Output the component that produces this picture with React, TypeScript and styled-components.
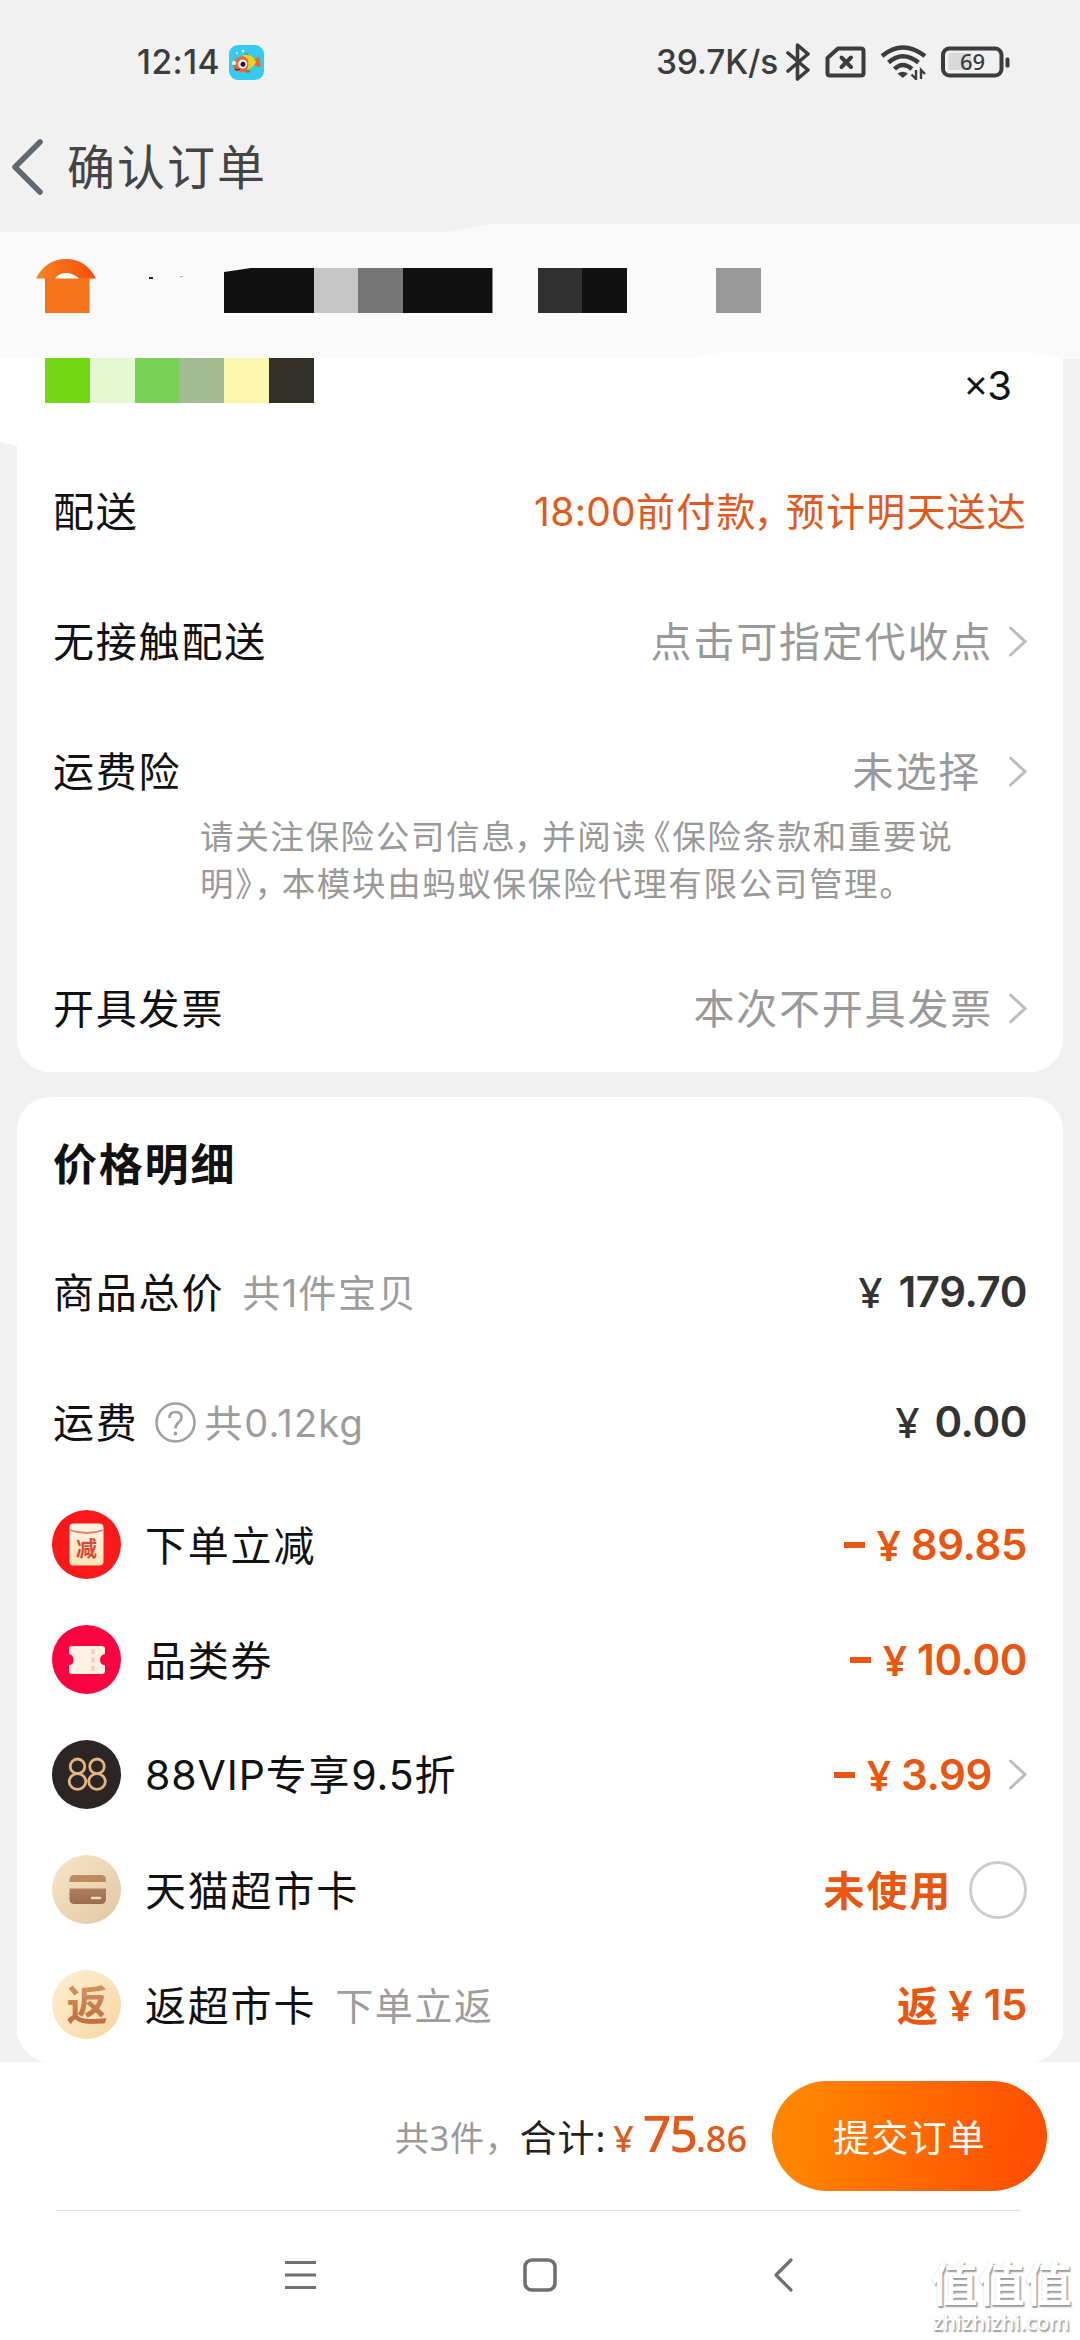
import React from 'react';
import styled, { createGlobalStyle } from 'styled-components';

const GlobalStyle = createGlobalStyle`
  * { box-sizing: border-box; }
  body { margin: 0; background: #f1f1f1; }
`;

const Screen = styled.div`
  width: 1080px;
  height: 2340px;
  display: flex;
  flex-direction: column;
  overflow: hidden;
  position: relative;
  background: #f1f1f1;
  color: #111;
  font-family: 'Noto Sans', 'Noto Sans CJK SC', sans-serif;
  white-space: nowrap;
`;

const StatusBar = styled.header`
  height: 124px;
  display: flex;
  align-items: center;
  justify-content: space-between;
  padding: 0 70px 0 137px;
  color: #3c3c3c;
`;

const StatusGroup = styled.div`
  display: flex;
  align-items: center;
`;

const StatusText = styled.span<{ $gap: number; $track: number }>`
  font-family: Inter, 'Noto Sans', sans-serif;
  font-size: 33.5px;
  font-weight: 500;
  line-height: 40px;
  letter-spacing: ${(p) => p.$track}px;
  margin-right: ${(p) => p.$gap}px;
`;

const StatusIcon = styled.svg<{ $gap?: number }>`
  display: block;
  margin-right: ${(p) => p.$gap ?? 0}px;
`;

const TitleBar = styled.div`
  height: 100px;
  display: flex;
  align-items: center;
  padding: 0 0 15px 9px;
`;

const BackIcon = styled.svg`
  display: block;
  margin: 0 22px 0 0;
`;

const PageTitle = styled.h1`
  margin: 0;
  font-size: 48px;
  font-weight: 400;
  line-height: 60px;
  letter-spacing: 2px;
  color: #444;
`;

const AddressBand = styled.section`
  position: relative;
  z-index: 1;
  flex: none;
  height: 135px;
  display: flex;
  align-items: flex-start;
  padding: 35px 0 0 36px;
  background: #fafafa;
  clip-path: polygon(0 8px, 448px 8px, 488px 0, 100% 0, 100% 135px, 1063px 135px, 1032px 128px, 722px 128px, 688px 134px, 0 134px);
`;

const HouseIcon = styled.svg`
  display: block;
  margin-right: 53px;
`;

const NameTrace = styled.svg`
  display: block;
  margin: 16px 39px 0 0;
`;

const Blocks = styled.div<{ $top?: number; $right?: number; $notched?: boolean }>`
  display: flex;
  margin: ${(p) => p.$top ?? 0}px ${(p) => p.$right ?? 0}px 0 0;
  clip-path: ${(p) => (p.$notched ? 'polygon(0 4px, 27px 0, 100% 0, 100% 100%, 0 100%)' : 'none')};
`;

const Block = styled.i<{ $color: string }>`
  width: 44.75px;
  height: 45px;
  background: ${(p) => p.$color};
`;

const ProductBand = styled.section`
  flex: none;
  width: 1063px;
  height: 94px;
  margin-top: -7px;
  padding: 6px 51px 0 45px;
  display: flex;
  justify-content: space-between;
  background: #fff;
  clip-path: polygon(0 0, 100% 0, 100% 100%, 17px 100%, 0 90px);
`;

const Quantity = styled.span`
  margin-top: 3px;
  font-family: 'Noto Sans', Inter, sans-serif;
  font-size: 40px;
  line-height: 48px;
`;

const Card = styled.section<{ $height: number; $open?: boolean }>`
  flex: none;
  height: ${(p) => p.$height}px;
  margin: 0 17px ${(p) => (p.$open ? 25 : 0)}px;
  padding: 0 36px;
  background: #fff;
  border-radius: ${(p) => (p.$open ? '0 0 33px 33px' : '33px')};
`;

const Row = styled.div<{ $height?: number; $top?: number }>`
  height: ${(p) => p.$height ?? 130}px;
  margin-top: ${(p) => p.$top ?? 0}px;
  padding-bottom: 2px;
  display: flex;
  align-items: center;
  font-size: 41px;
  letter-spacing: 1.8px;
  line-height: 50px;
`;

const Label = styled.span`
  margin-right: auto;
  display: flex;
  align-items: center;
`;

const Sub = styled.span<{ $left: number }>`
  margin-left: ${(p) => p.$left}px;
  font-size: 38px;
  letter-spacing: 1.6px;
  color: #9c9c9c;
`;

const Latin = styled.span<{ $track?: number }>`
  font-family: Inter, 'Noto Sans', sans-serif;
  letter-spacing: ${(p) => p.$track ?? 0}px;
`;

const Value = styled.span<{ $gap?: number }>`
  color: #999;
  margin-right: ${(p) => p.$gap ?? 15}px;
`;

const Promise = styled.span`
  font-size: 39px;
  letter-spacing: 1.2px;
  color: #e2591b;
`;

const Squeeze = styled.span<{ $l?: number; $r?: number }>`
  margin-left: ${(p) => p.$l ?? 0}px;
  margin-right: ${(p) => p.$r ?? 0}px;
`;

const Note = styled.p`
  margin: -24px 0 0 147px;
  font-size: 33.5px;
  line-height: 47px;
  letter-spacing: 1.65px;
  color: #999;
`;

const CardTitle = styled.h2`
  margin: 0;
  height: 131px;
  padding-bottom: 2px;
  display: flex;
  align-items: center;
  font-size: 44px;
  font-weight: 700;
  letter-spacing: 1.8px;
`;

const Money = styled.span<{ $accent?: boolean; $gap?: number }>`
  display: flex;
  align-items: center;
  font-family: Inter, 'Noto Sans', sans-serif;
  font-size: 42px;
  font-weight: 600;
  letter-spacing: -0.4px;
  color: ${(p) => (p.$accent ? '#e8560f' : '#333')};
  margin-right: ${(p) => p.$gap ?? 0}px;
`;

const Yen = styled.span<{ $gap: number; $light?: boolean }>`
  font-family: 'Noto Sans', sans-serif;
  font-weight: ${(p) => (p.$light ? 500 : 600)};
  margin-right: ${(p) => p.$gap}px;
  letter-spacing: 0;
`;

const Minus = styled.i`
  width: 21px;
  height: 6px;
  margin-right: 12px;
  background: currentColor;
`;

const Prefix = styled.span`
  font-family: 'Noto Sans', 'Noto Sans CJK SC', sans-serif;
  font-size: 41px;
  font-weight: 700;
  margin-right: 11px;
`;

const Unused = styled.span`
  font-size: 41px;
  font-weight: 700;
  letter-spacing: 1.8px;
  color: #e8560f;
  margin-right: 17px;
`;

const Radio = styled.i`
  width: 58px;
  height: 58px;
  border: 3px solid #ccc;
  border-radius: 50%;
`;

const Badge = styled.svg`
  display: block;
  margin: 0 24px 0 -1px;
`;

const HelpIcon = styled.svg`
  display: block;
  margin: 0 9px 0 16px;
`;

const CheckoutBar = styled.footer`
  position: relative;
  flex: none;
  height: 278px;
  background: #fff;
`;

const Summary = styled.div`
  height: 148px;
  display: flex;
  align-items: center;
  justify-content: flex-end;
  padding-right: 33px;
`;

const Count = styled.span`
  font-size: 34px;
  letter-spacing: 0.8px;
  color: #999;
  margin-right: 0;
`;

const TotalLabel = styled.span`
  font-size: 37px;
  letter-spacing: 0.9px;
  color: #222;
  margin-right: 7px;
`;

const Total = styled.span`
  display: flex;
  align-items: baseline;
  font-size: 36px;
  line-height: 60px;
  font-weight: 500;
  color: #e2591b;
  margin-right: 25px;
`;

const TotalInt = styled.span`
  font-size: 50px;
  letter-spacing: -2px;
  margin-left: 9px;
`;

const Submit = styled.button`
  width: 275px;
  height: 110px;
  border: 0;
  border-radius: 55px;
  padding: 0;
  background: linear-gradient(100deg, #ff8600 10%, #ff5000 90%);
  color: #fff;
  font: 400 37px/50px 'Noto Sans CJK SC', sans-serif;
  letter-spacing: 1.3px;
`;

const Divider = styled.hr`
  margin: 0 60px 0 56px;
  border: 0;
  height: 1px;
  background: #dedede;
`;

const SystemNav = styled.nav`
  height: 129px;
  display: flex;
  align-items: center;
  padding: 0 0 1px 284px;
`;

const HomeKey = styled.svg`
  margin: 0 216px 0 206px;
`;

const Watermark = styled.div`
  position: absolute;
  right: 8px;
  bottom: 5px;
  width: 142px;
  text-align: center;
  color: #fff;
  text-shadow: 1.5px 1.5px 1.5px #999, 0 0 1px #ccc;
`;

const WatermarkMark = styled.div`
  margin-bottom: 3px;
  font: 700 47px/50px 'Noto Sans CJK SC', sans-serif;
`;

const WatermarkUrl = styled.div`
  font: 600 21px/26px 'Open Sans', sans-serif;
`;

const Chevron = () => (
  <svg width="19" height="31" viewBox="0 0 19 31" fill="none">
    <path d="M2.5 2 17 15.5 2.5 29" stroke="#bdbdbd" strokeWidth="3" strokeLinecap="round" />
  </svg>
);

const FishApp = () => (
  <StatusIcon width="35" height="35" viewBox="0 0 35 35">
    <rect width="35" height="35" rx="9" fill="#35cbf0" />
    <circle cx="8" cy="8" r="1.2" fill="#b8f1ff" />
    <circle cx="14" cy="6" r="1.3" fill="#b8f1ff" />
    <path d="M14 11Q18 5 20 11Z" fill="#a87f32" />
    <path d="M25 15Q29 11 31 13Q30 17 32 21Q28 24 25 19Z" fill="#ee6534" />
    <path d="M14 10Q23 8 27 17Q23 25 15 25Z" fill="#e8d51d" />
    <path d="M4 20Q5 12 14 11Q21 13 19 22Q18 28 11 27Q4 25 4 20Z" fill="#ec6637" />
    <path d="M16 25Q20 24 22 27L17 28Z" fill="#b76a28" />
    <circle cx="5" cy="18" r="2" fill="#fff" />
    <circle cx="13.5" cy="19" r="4.5" fill="#fff" />
    <circle cx="14" cy="19.3" r="2.5" fill="#17123d" />
    <path d="M6 24Q8 26 11 24" stroke="#612" strokeWidth="1.2" fill="none" />
  </StatusIcon>
);

const StatusIcons = () => (
  <>
    <StatusIcon $gap={15} width="24" height="40" viewBox="0 0 24 40" fill="none" stroke="currentColor" strokeWidth="3.6" strokeLinejoin="round" strokeLinecap="round">
      <path d="M2 11 22 28 11.5 37V3L22 12 2 29" />
    </StatusIcon>
    <StatusIcon $gap={14} width="41" height="32" viewBox="0 0 41 32" fill="none" stroke="currentColor" strokeWidth="4">
      <path d="M13 2.5H36Q38.5 2.5 38.5 5V27Q38.5 29.5 36 29.5H5Q2.5 29.5 2.5 27V12Z" strokeLinejoin="round" />
      <path d="M16.5 11.5 26 21M26 11.5 16.5 21" strokeLinecap="round" />
    </StatusIcon>
    <StatusIcon $gap={14} width="47" height="36" viewBox="0 0 47 36" fill="none" stroke="currentColor" strokeWidth="4.4">
      <path d="M2 12Q22.500-5 45 12" />
      <path d="M8.500 18.500Q22.500 6 38.500 18.500" />
      <path d="M14.500 25Q22.500 17 32 25" />
      <path d="M17.500 29.500Q22.500 26 28 29.500L22.800 34Z" fill="currentColor" stroke="none" />
      <g strokeWidth="2.4">
        <path d="M36 26V35L31.500 30.500M41 35V26L45 30" />
      </g>
    </StatusIcon>
    <StatusIcon width="69" height="32" viewBox="0 0 69 32">
      <rect x="2" y="2.500" width="58.500" height="27" rx="6.500" fill="none" stroke="currentColor" strokeWidth="4" />
      <rect x="7.500" y="7" width="23" height="17" rx="2" fill="#d9d9d9" />
      <rect x="64.500" y="11.500" width="4" height="10" rx="1.500" fill="currentColor" />
      <text x="31.500" y="24" textAnchor="middle" fontSize="22" fontWeight="500" fill="currentColor">69</text>
    </StatusIcon>
  </>
);

const ReduceBadge = () => (
  <Badge width="69" height="69" viewBox="0 0 69 69">
    <defs>
      <linearGradient id="packet" x2="0" y2="1">
        <stop stopColor="#fff6e8" />
        <stop offset="1" stopColor="#ffe6b6" />
      </linearGradient>
    </defs>
    <circle cx="34.500" cy="34.500" r="34.500" fill="#fb1a19" />
    <rect x="17.500" y="13.500" width="34" height="42" rx="4" fill="url(#packet)" />
    <path d="M17.500 20Q34.500 26 51.500 20" fill="none" stroke="#f07a66" strokeWidth="1.800" />
    <text x="34.500" y="46" textAnchor="middle" fontSize="21" fontWeight="700" letterSpacing="0" fill="#dc453a">减</text>
  </Badge>
);

const CouponBadge = () => (
  <Badge width="69" height="69" viewBox="0 0 69 69">
    <circle cx="34.500" cy="34.500" r="34.500" fill="#fb0340" />
    <path d="M20 21H50Q53 21 53 24V29Q48 30 48 35Q48 39.500 53 40.500V46Q53 49 50 49H20Q17 49 17 46V40.500Q21.500 39.500 21.500 35Q21.500 30 17 29V24Q17 21 20 21Z" fill="#fff0e4" />
    <path d="M41 24V47" stroke="#f2ccbd" strokeWidth="3.500" strokeDasharray="5 3.500" />
  </Badge>
);

const VipBadge = () => (
  <Badge width="69" height="69" viewBox="0 0 69 69" fill="none" stroke="#e2b47e" strokeWidth="2.800">
    <circle cx="34.500" cy="34.500" r="34.500" fill="#2b2525" stroke="none" />
    <ellipse cx="25.500" cy="26.300" rx="7.300" ry="7.300" />
    <ellipse cx="25.500" cy="41.500" rx="8.300" ry="7.800" />
    <ellipse cx="45" cy="26.300" rx="7.300" ry="7.300" />
    <ellipse cx="45" cy="41.500" rx="8.300" ry="7.800" />
  </Badge>
);

const WalletBadge = () => (
  <Badge width="69" height="69" viewBox="0 0 69 69">
    <defs>
      <linearGradient id="sand" x2="1" y2="1">
        <stop stopColor="#f9e6c9" />
        <stop offset="1" stopColor="#dfc6a4" />
      </linearGradient>
      <linearGradient id="leather" x2="0" y2="1">
        <stop stopColor="#b08062" />
        <stop offset="1" stopColor="#9d6a50" />
      </linearGradient>
    </defs>
    <circle cx="34.500" cy="34.500" r="34.500" fill="url(#sand)" />
    <path d="M17.500 27V25Q17.500 20 22.500 20H49Q54 20 54 25V27Z" fill="#bb8d5e" />
    <path d="M17.500 33.500H54V44Q54 49 49 49H22.500Q17.500 49 17.500 44Z" fill="url(#leather)" />
    <path d="M40 43H48" stroke="#f2dcc0" strokeWidth="2.500" strokeLinecap="round" />
  </Badge>
);

const ReturnBadge = () => (
  <Badge width="69" height="69" viewBox="0 0 69 69">
    <defs>
      <linearGradient id="cream" x2="1" y2="1">
        <stop stopColor="#fdf1d3" />
        <stop offset="1" stopColor="#f7d5a0" />
      </linearGradient>
      <linearGradient id="copper" x2="0" y2="1">
        <stop stopColor="#d79c64" />
        <stop offset="1" stopColor="#b9673a" />
      </linearGradient>
    </defs>
    <circle cx="34.500" cy="34.500" r="34.500" fill="url(#cream)" />
    <text x="35" y="49.500" textAnchor="middle" fontSize="41" fontWeight="700" letterSpacing="0" fill="url(#copper)">返</text>
  </Badge>
);

const discounts = [
  { icon: <ReduceBadge />, name: '下单立减', amount: '89.85' },
  { icon: <CouponBadge />, name: '品类券', amount: '10.00' },
];

export default function App() {
  return (
    <Screen>
      <GlobalStyle />
      <StatusBar>
        <StatusGroup>
          <StatusText $gap={9} $track={0.5}>12:14</StatusText>
          <FishApp />
        </StatusGroup>
        <StatusGroup>
          <StatusText $gap={8} $track={-0.2}>39.7K/s</StatusText>
          <StatusIcons />
        </StatusGroup>
      </StatusBar>
      <TitleBar>
        <BackIcon width="36" height="58" viewBox="0 0 36 58" fill="none">
          <path d="M31 4 6 29 31 54" stroke="#5f6771" strokeWidth="5.500" strokeLinecap="round" strokeLinejoin="round" />
        </BackIcon>
        <PageTitle>确认订单</PageTitle>
      </TitleBar>

      <AddressBand>
        <HouseIcon width="60" height="55" viewBox="0 0 60 55">
          <defs>
            <linearGradient id="roof">
              <stop stopColor="#f48420" />
              <stop offset="1" stopColor="#fb4c0a" />
            </linearGradient>
          </defs>
          <path d="M0 19.500Q10 0 30 0T60 19.500Z" fill="url(#roof)" />
          <rect x="9" y="19" width="44.500" height="35" fill="#f3721c" />
          <path d="M19 19.500Q23 14 30 14T43 19.500Z" fill="#fff" />
        </HouseIcon>
        <NameTrace width="36" height="6" viewBox="0 0 36 6">
          <rect x="0" y="2" width="4" height="2" fill="#222" />
          <rect x="31" y="1" width="3" height="1" fill="#aaa" />
        </NameTrace>
        <Blocks $top={9} $right={45} $notched>
          {['#111', '#111', '#c6c6c6', '#757575', '#111', '#111'].map((c, i) => <Block key={i} $color={c} />)}
        </Blocks>
        <Blocks $top={9} $right={89}>
          <Block $color="#303030" />
          <Block $color="#111" />
        </Blocks>
        <Blocks $top={9}>
          <Block $color="#989898" />
        </Blocks>
      </AddressBand>

      <ProductBand>
        <Blocks>
          {['#73d713', '#e4f8d1', '#7ad055', '#a2bd93', '#fdf7ae', '#303029'].map((c) => <Block key={c} $color={c} />)}
        </Blocks>
        <Quantity>×<Latin>3</Latin></Quantity>
      </ProductBand>

      <Card $height={626} $open>
        <Row $top={1}>
          <Label>配送</Label>
          <Promise><Latin $track={0.3}>18:00</Latin>前付款<Squeeze $l={-3} $r={-8}>，</Squeeze>预计明天送达</Promise>
        </Row>
        <Row>
          <Label>无接触配送</Label>
          <Value>点击可指定代收点</Value>
          <Chevron />
        </Row>
        <Row>
          <Label>运费险</Label>
          <Value $gap={27}>未选择</Value>
          <Chevron />
        </Row>
        <Note>
          请关注保险公司信息<Squeeze $l={-2} $r={-7.5}>，</Squeeze>并阅读<Squeeze $l={-10.5}>《</Squeeze>保险条款和重要说
          <br />
          明<Squeeze $r={1}>》</Squeeze><Squeeze $r={-8}>，</Squeeze>本模块由蚂蚁保保险代理有限公司管理。
        </Note>
        <Row $top={37}>
          <Label>开具发票</Label>
          <Value>本次不开具发票</Value>
          <Chevron />
        </Row>
      </Card>

      <Card $height={965}>
        <CardTitle>价格明细</CardTitle>
        <Row>
          <Label>商品总价<Sub $left={18}>共<Latin $track={1}>1</Latin>件宝贝</Sub></Label>
          <Money><Yen $gap={16} $light>¥</Yen>179.70</Money>
        </Row>
        <Row>
          <Label>
            运费
            <HelpIcon width="41" height="41" viewBox="0 0 41 41" fill="none" stroke="#a0a0a0" strokeWidth="2.600">
              <circle cx="20.500" cy="20.500" r="19" />
              <path d="M14.500 16Q14.500 10 20.500 10T26.500 15.500Q26.500 18 23.500 20.500Q20.500 23 20.500 26.500" />
              <circle cx="20.500" cy="31.500" r="1.300" fill="#a0a0a0" stroke="#a0a0a0" strokeWidth="1.200" />
            </HelpIcon>
            <Sub $left={0}>共<Latin $track={1.2}>0.12kg</Latin></Sub>
          </Label>
          <Money><Yen $gap={15} $light>¥</Yen>0.00</Money>
        </Row>
        {discounts.map((d) => (
          <Row key={d.name} $height={115}>
            {d.icon}
            <Label>{d.name}</Label>
            <Money $accent><Minus /><Yen $gap={10}>¥</Yen>{d.amount}</Money>
          </Row>
        ))}
        <Row $height={115}>
          <VipBadge />
          <Label><span><Latin $track={0.9}>88VIP</Latin>专享<Latin $track={0.9}>9.5</Latin>折</span></Label>
          <Money $accent $gap={16}><Minus /><Yen $gap={10}>¥</Yen>3.99</Money>
          <Chevron />
        </Row>
        <Row $height={115}>
          <WalletBadge />
          <Label>天猫超市卡</Label>
          <Unused>未使用</Unused>
          <Radio />
        </Row>
        <Row $height={115}>
          <ReturnBadge />
          <Label>返超市卡<Sub $left={19}>下单立返</Sub></Label>
          <Money $accent><Prefix>返</Prefix><Yen $gap={11}>¥</Yen>15</Money>
        </Row>
      </Card>

      <CheckoutBar>
        <Summary>
          <Count>共3件，</Count>
          <TotalLabel>合计:</TotalLabel>
          <Total>¥<TotalInt>75</TotalInt>.86</Total>
          <Submit>提交订单</Submit>
        </Summary>
        <Divider />
        <SystemNav>
          <svg width="33" height="32" viewBox="0 0 33 32" stroke="#707070" strokeWidth="3.200">
            <path d="M1 3.500H32M1 16H32M1 28.500H32" />
          </svg>
          <HomeKey width="34" height="34" viewBox="0 0 34 34" fill="none">
            <rect x="2" y="2" width="30" height="30" rx="7" stroke="#707070" strokeWidth="3.600" />
          </HomeKey>
          <svg width="20" height="34" viewBox="0 0 20 34" fill="none">
            <path d="M18 2 3 17 18 32" stroke="#707070" strokeWidth="3.200" strokeLinecap="round" strokeLinejoin="round" />
          </svg>
        </SystemNav>
        <Watermark>
          <WatermarkMark>值值值</WatermarkMark>
          <WatermarkUrl>zhizhizhi.com</WatermarkUrl>
        </Watermark>
      </CheckoutBar>
    </Screen>
  );
}
